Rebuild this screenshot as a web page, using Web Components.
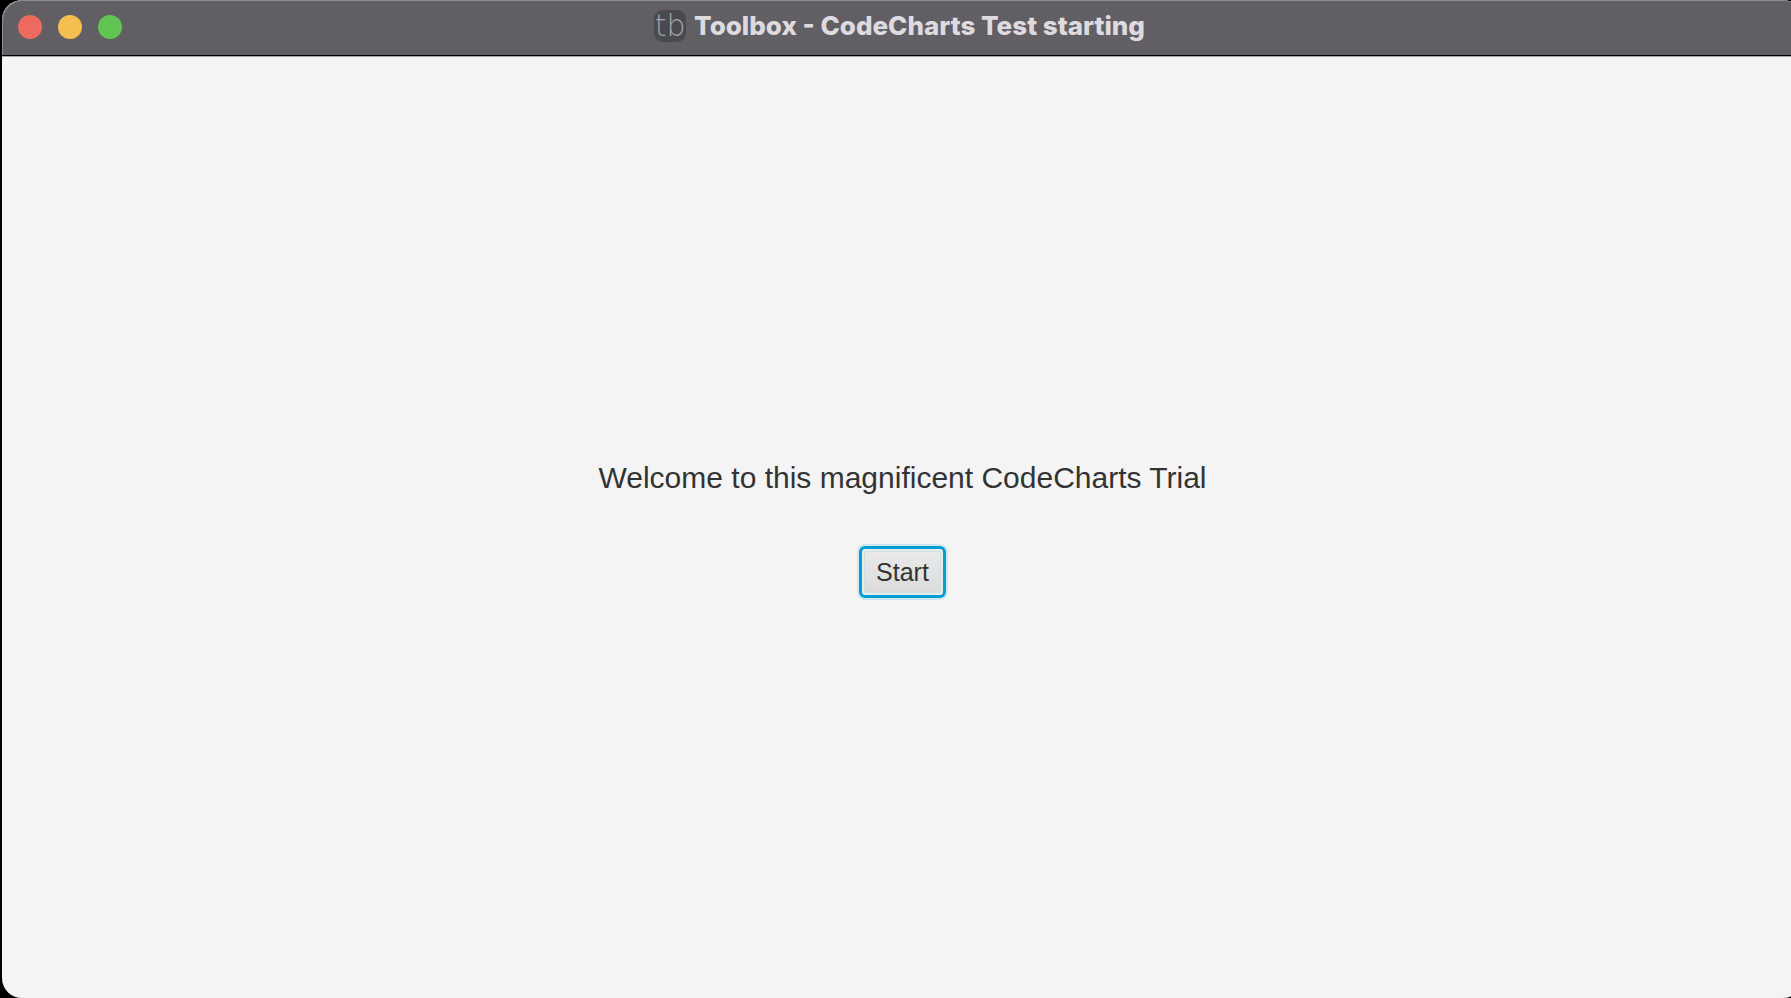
<!DOCTYPE html>
<html lang="en">
<head>
<meta charset="utf-8">
<title>Toolbox - CodeCharts Test starting</title>
<style>
html, body { height: 100%; margin: 0; background: #000; overflow: hidden; }
body { font-family: Inter, "Liberation Sans", sans-serif; }
</style>
</head>
<body>
<app-window>
  <title-bar slot="bar">Toolbox - CodeCharts Test starting</title-bar>
  <welcome-panel>
    Welcome to this magnificent CodeCharts Trial
    <start-button slot="action">Start</start-button>
  </welcome-panel>
</app-window>
<script>
function define(name, html) {
  const template = document.createElement('template');
  template.innerHTML = html;
  customElements.define(name, class extends HTMLElement {
    constructor() {
      super();
      this.attachShadow({ mode: 'open' }).append(template.content.cloneNode(true));
    }
  });
}

define('app-window', `
  <style>
    :host { display: flex; flex-direction: column; box-sizing: border-box; height: 100vh;
      margin-left: 2px; margin-right: -12px; border-radius: 20px; overflow: hidden; background: #f4f4f4; }
    main { flex: 1; display: grid; place-items: center; border-top: 1px solid #aaa8ab; }
  </style>
  <slot name="bar"></slot>
  <main><slot></slot></main>`);

define('traffic-lights', `
  <style>
    :host { display: flex; gap: 16px; }
    button { width: 24px; height: 24px; padding: 0; border: 0; border-radius: 50%; }
    .close { background: #ed6a5e; }
    .minimize { background: #f5bf4f; }
    .zoom { background: #61c554; }
  </style>
  <button class="close" aria-label="Close"></button>
  <button class="minimize" aria-label="Minimize"></button>
  <button class="zoom" aria-label="Zoom"></button>`);

define('app-logo', `
  <style>
    :host { display: block; width: 32px; height: 32px; border-radius: 9px; background: #494a50;
      color: #a2a3a7; font-family: "DejaVu Sans", sans-serif; font-size: 30px; font-weight: 200;
      line-height: 32px; text-align: center; white-space: nowrap; }
  </style>
  <span>tb</span>`);

define('title-bar', `
  <style>
    :host { display: grid; grid-template-columns: 1fr auto 1fr; align-items: center; box-sizing: border-box;
      height: 56px; padding: 0 22px 2px 16px; border-bottom: 1px solid #000; background: #625f64;
      border-radius: 20px 20px 0 0; box-shadow: inset 1px 1px 0 #8f8d91; color: #dddbe0; }
    .title { display: flex; align-items: center; gap: 8px; padding-bottom: 2px; }
    h1 { margin: 0; font-size: 26px; line-height: 32px; font-weight: 800; white-space: nowrap; }
  </style>
  <traffic-lights></traffic-lights>
  <div class="title"><app-logo></app-logo><h1><slot></slot></h1></div>`);

define('welcome-panel', `
  <style>
    :host { display: flex; flex-direction: column; align-items: center; gap: 48px; color: #333;
      font-family: "Liberation Sans", Arial, sans-serif; }
    p { margin: 0; font-size: 30px; line-height: 40px; white-space: nowrap; }
  </style>
  <p><slot></slot></p>
  <slot name="action"></slot>`);

define('start-button', `
  <style>
    :host { display: block; }
    button { display: block; padding: 7px 14px; border: 3px solid #039ed3; border-radius: 6px;
      background: linear-gradient(#ebebeb, #dadada);
      box-shadow: 0 0 0 2px #d0e7ef, inset 0 0 0 2px #e9eaeb, inset 0 0 0 3px #d0dfe4;
      color: #333; font: inherit; font-size: 25px; line-height: 32px; }
  </style>
  <button type="button"><slot></slot></button>`);
</script>
</body>
</html>
